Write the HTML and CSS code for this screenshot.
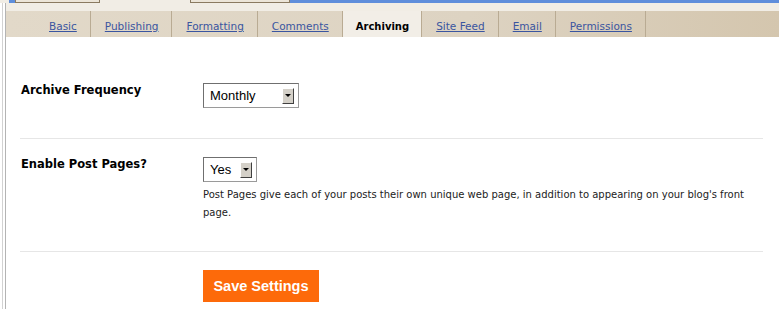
FILE: index.html
```html
<!DOCTYPE html>
<html lang="en">
<head>
  <meta charset="UTF-8">
  <title>Settings - Archiving</title>
  <link rel="stylesheet" href="styles.css">
</head>
<body>
  <!-- top edge of the header above the tabs -->
  <div class="topstrip">
    <span class="strip-gap first"></span>
    <span class="strip-blue small"></span>
    <span class="strip-box one"></span>
    <span class="strip-gap mid"></span>
    <span class="strip-box two"></span>
    <span class="strip-blue"></span>
  </div>

  <div class="frame">
    <div class="inner">
      <div class="tabbar">
        <ul class="tabs">
          <li><a href="#">Basic</a></li>
          <li><a href="#">Publishing</a></li>
          <li><a href="#">Formatting</a></li>
          <li><a href="#">Comments</a></li>
          <li class="active"><span>Archiving</span></li>
          <li><a href="#">Site Feed</a></li>
          <li><a href="#">Email</a></li>
          <li><a href="#">Permissions</a></li>
        </ul>
      </div>

      <div class="panel">
        <div class="row">
          <div class="label">Archive Frequency</div>
          <div class="field">
            <div class="select monthly">
              <span class="value">Monthly</span>
              <span class="arrow"><span class="tri"></span></span>
            </div>
          </div>
        </div>

        <div class="row">
          <div class="label">Enable Post Pages?</div>
          <div class="field">
            <div class="select yes">
              <span class="value">Yes</span>
              <span class="arrow"><span class="tri"></span></span>
            </div>
            <p class="help">Post Pages give each of your posts their own unique web page, in addition to appearing on your blog's front page.</p>
          </div>
        </div>

        <div class="row last">
          <div class="label"></div>
          <div class="field">
            <button class="save">Save Settings</button>
          </div>
        </div>
      </div>
    </div>
  </div>
</body>
</html>
```

FILE: styles.css
```css
body {
  margin: 0;
  background: #fff;
  font-family: "DejaVu Sans", Verdana, sans-serif;
  color: #000;
}

/* header edge */
.topstrip {
  display: flex;
  height: 3px;
  background: #f1ede5;
}

.strip-gap.first {
  width: 9px;
}

.strip-gap.mid {
  width: 90px;
}

.strip-blue {
  flex: 1;
  background: #5f8edb;
}

.strip-blue.small {
  flex: none;
  width: 6px;
}

.strip-box {
  background: #ece5d8;
  border: 1px solid #8a7a60;
  border-top: none;
  height: 2px;
}

.strip-box.one {
  width: 83px;
}

.strip-box.two {
  width: 98px;
}

/* left double rule */
.frame {
  margin-left: 2px;
  border-left: 1px solid #d2d2d2;
  min-height: calc(100vh - 3px);
}

.inner {
  margin-left: 2px;
  border-left: 1px solid #b4b4b4;
  min-height: calc(100vh - 3px);
}

/* tabs */
.tabbar {
  background: linear-gradient(to bottom, #f1ede5 0, #f1ede5 8px, transparent 8px),
              linear-gradient(to right, #e2d9c9, #ddd3c2 60%, #d4c6ae);
  padding-top: 8px;
}

.tabs {
  list-style: none;
  margin: 0;
  padding: 0 0 0 29px;
  display: flex;
  height: 26px;
}

.tabs li {
  display: flex;
  align-items: center;
  padding: 4px 13px 0 14px;
  border-right: 1px solid #b9ab93;
  font-size: 10.5px;
}

.tabs li a {
  color: #3a55a0;
  text-decoration: underline;
}

.tabs li.active {
  background: #f2eee7;
  font-weight: bold;
  font-size: 10px;
  color: #000;
  padding: 4px 12px 0 13px;
}

/* form */
.panel {
  padding: 28px 16px 0 14px;
}

.row {
  display: flex;
  padding: 18px 0 30px;
  border-bottom: 1px solid #e6e6e6;
}

.row:nth-child(2) {
  padding-bottom: 29px;
}

.row.last {
  border-bottom: none;
  padding-bottom: 0;
}

.label {
  width: 182px;
  padding-left: 1px;
  font-size: 11.5px;
  font-weight: bold;
  line-height: 14px;
}

.field {
  flex: 1;
}

.select {
  display: flex;
  align-items: center;
  justify-content: space-between;
  box-sizing: border-box;
  height: 25px;
  border: 1px solid #6f6f6f;
  border-right-color: #9a9a9a;
  border-bottom-color: #9a9a9a;
  background: #fff;
  padding: 0 4px 0 6px;
  font-family: "Liberation Sans", Arial, sans-serif;
  font-size: 13px;
}

.select.monthly {
  width: 96px;
}

.select.yes {
  width: 54px;
}

.arrow {
  box-sizing: border-box;
  width: 12px;
  height: 16px;
  background: #d4d0c8;
  border: 1px solid;
  border-color: #fff #404040 #404040 #fff;
  display: flex;
  align-items: center;
  justify-content: center;
}

.tri {
  width: 0;
  height: 0;
  border-left: 3px solid transparent;
  border-right: 3px solid transparent;
  border-top: 3px solid #000;
}

.help {
  margin: 4px 0 0;
  font-size: 10px;
  line-height: 18px;
  color: #222;
  max-width: 545px;
}

.save {
  background: #fd6a0a;
  border: none;
  color: #fff;
  font-family: "Liberation Sans", Arial, sans-serif;
  font-weight: bold;
  font-size: 14.5px;
  width: 116px;
  height: 32px;
  padding: 0;
  cursor: pointer;
}
```
